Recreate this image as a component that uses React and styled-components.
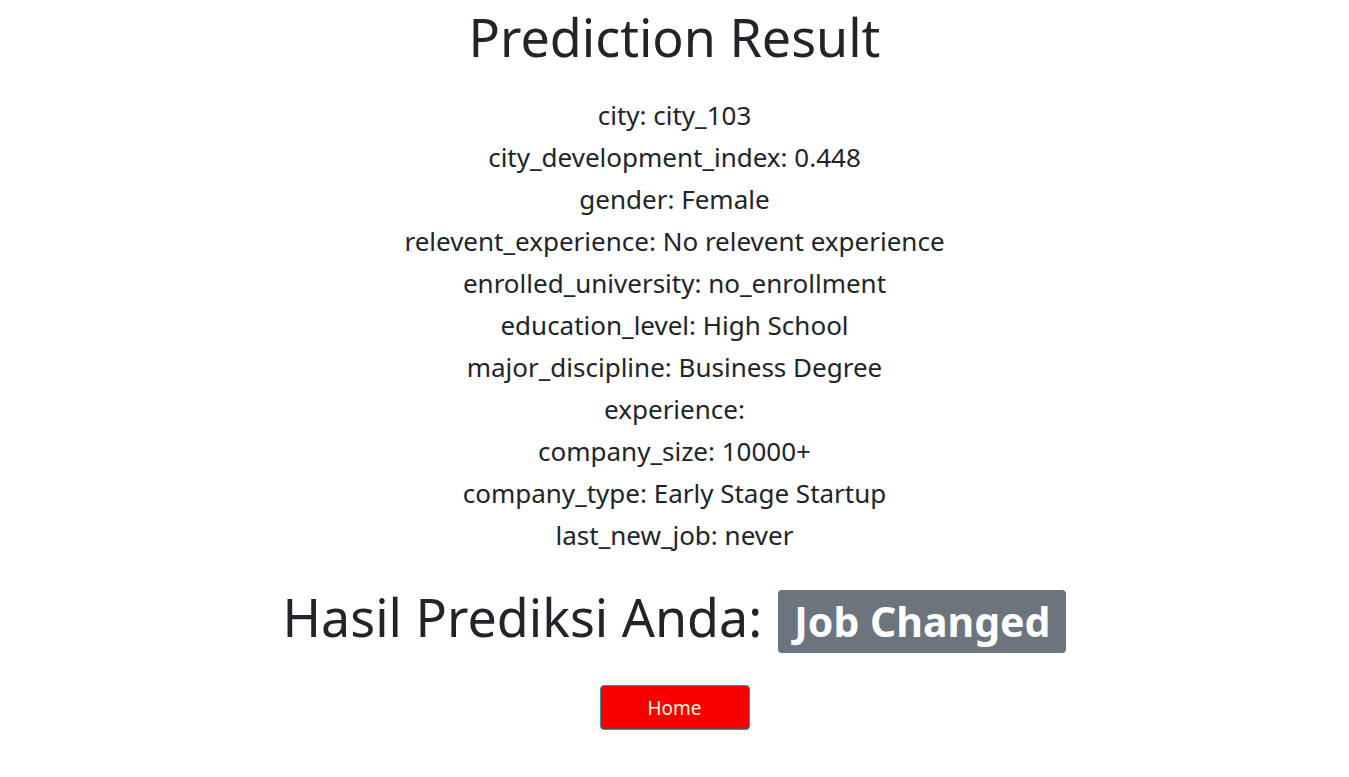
import React from "react";
import styled, { createGlobalStyle } from "styled-components";

const GlobalStyle = createGlobalStyle`
  *, *::before, *::after { box-sizing: border-box; }
  body {
    margin: 0;
    background: #fff;
    color: #212529;
    font-family: "Segoe UI", "Noto Sans", "Open Sans", sans-serif;
  }
`;

const Page = styled.main`
  display: flex;
  flex-direction: column;
  align-items: center;
  text-align: center;
`;

const Title = styled.h1`
  margin: 4px 0 24px;
  font-size: 52px;
  line-height: 66px;
  font-weight: 400;
`;

const Details = styled.ul`
  list-style: none;
  margin: 0;
  padding: 0;
  font-size: 26px;
  line-height: 42px;
`;

const Result = styled.h2`
  display: flex;
  align-items: baseline;
  gap: 16px;
  margin: 28px 0 32px;
  font-size: 52px;
  line-height: 66px;
  font-weight: 400;
`;

const Badge = styled.span`
  padding: 11px 16px;
  border-radius: 4px;
  background: #6c757d;
  color: #fff;
  font-size: 41px;
  line-height: 41px;
  font-weight: 700;
`;

const HomeButton = styled.button`
  min-width: 150px;
  padding: 9px 16px 8px;
  border: 1px solid #17a2b8;
  border-radius: 4px;
  background: #f80000;
  color: #fff8dc;
  font: inherit;
  font-size: 19px;
  line-height: 26px;
  cursor: pointer;
`;

const details = [
  ["city", "city_103"],
  ["city_development_index", "0.448"],
  ["gender", "Female"],
  ["relevent_experience", "No relevent experience"],
  ["enrolled_university", "no_enrollment"],
  ["education_level", "High School"],
  ["major_discipline", "Business Degree"],
  ["experience", ""],
  ["company_size", "10000+"],
  ["company_type", "Early Stage Startup"],
  ["last_new_job", "never"],
];

export default function App() {
  return (
    <Page>
      <GlobalStyle />
      <Title>Prediction Result</Title>
      <Details>
        {details.map(([name, value]) => (
          <li key={name}>{`${name}: ${value}`}</li>
        ))}
      </Details>
      <Result>
        Hasil Prediksi Anda: <Badge>Job Changed</Badge>
      </Result>
      <HomeButton type="button">Home</HomeButton>
    </Page>
  );
}
